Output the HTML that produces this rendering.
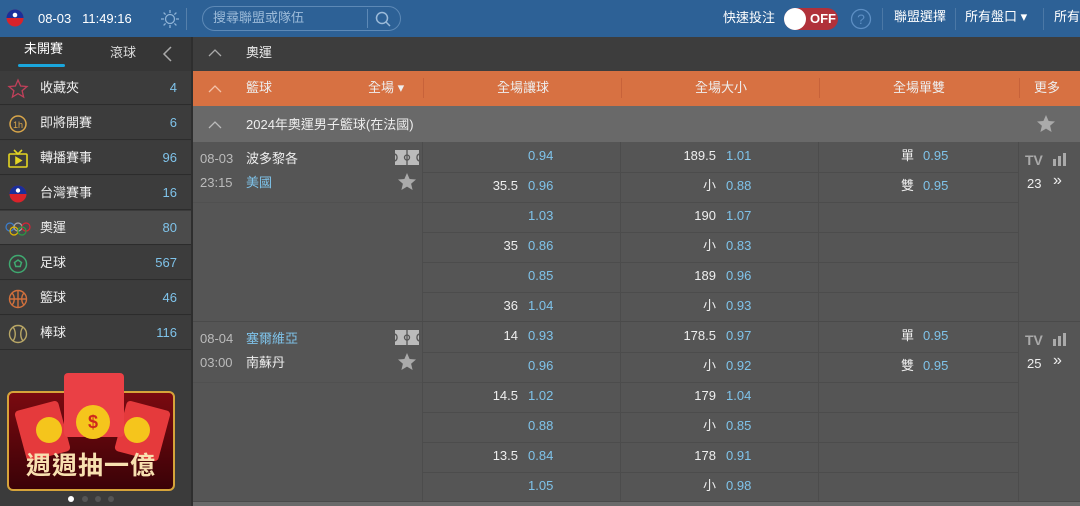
<!DOCTYPE html>
<html><head><meta charset="utf-8"><style>
*{margin:0;padding:0;box-sizing:border-box}
body{width:1080px;height:506px;overflow:hidden;background:#555;font-family:"Liberation Sans","Noto Sans CJK TC",sans-serif;font-size:13px;line-height:16px;color:#eee;position:relative}
.abs{position:absolute}
.top{left:0;top:0;width:1080px;height:37px;background:#2d6196}
.side{left:0;top:37px;width:191px;height:469px;background:#3b3b3b}
.item{position:absolute;left:0;width:191px;height:34px;border-bottom:1px solid #2c2c2c;background:#3c3c3c}
.item .t{position:absolute;left:40px;top:9px;font-size:13px;color:#eee}
.item .n{position:absolute;right:14px;top:9px;color:#7fc3ea;font-size:13px}
.item svg{position:absolute;left:7px;top:7px}
.blue{color:#7fc3ea}
.r{position:absolute;font-size:13px;line-height:16px}
.sep{position:absolute;background:#4c4c4c}
</style></head><body>
<div class="abs top">
 <svg class="abs" style="left:6px;top:9px" width="18" height="18"><circle cx="9" cy="9" r="8.5" fill="#d9232a"/><path d="M.5 9A8.5 8.5 0 0 1 17.5 9z" fill="#1a2f9a"/><circle cx="9" cy="6" r="2.3" fill="#fff"/></svg>
 <div class="abs" style="left:38px;top:11px;color:#fff;font-size:13px">08-03&nbsp;&nbsp;&nbsp;11:49:16</div>
 <svg class="abs" style="left:160px;top:9px" width="20" height="20" stroke="#8fb3d6" fill="none" stroke-width="1.3"><circle cx="10" cy="10" r="4.5"/><path d="M10 1v3M10 16v3M1 10h3M16 10h3M3.6 3.6l2 2M14.4 14.4l2 2M3.6 16.4l2-2M14.4 5.6l2-2"/></svg>
 <div class="abs" style="left:186px;top:8px;width:1px;height:22px;background:#5680ab"></div>
 <div class="abs" style="left:202px;top:6px;width:199px;height:25px;border:1px solid #5d89b6;border-radius:13px"></div>
 <div class="abs" style="left:213px;top:10px;color:#9cbbd9;font-size:13px">搜尋聯盟或隊伍</div>
 <div class="abs" style="left:367px;top:9px;width:1px;height:19px;background:#5d89b6"></div>
 <svg class="abs" style="left:374px;top:10px" width="18" height="18" stroke="#9cbbd9" fill="none" stroke-width="1.5"><circle cx="8" cy="8" r="5.5"/><path d="M12 12l4 4"/></svg>
 <div class="abs" style="left:723px;top:10px;color:#fff">快速投注</div>
 <div class="abs" style="left:784px;top:8px;width:54px;height:22px;border-radius:11px;background:#b0313a"></div>
 <div class="abs" style="left:784px;top:8px;width:22px;height:22px;border-radius:11px;background:#fff"></div>
 <div class="abs" style="left:810px;top:11px;color:#fff;font-weight:bold;font-size:13px">OFF</div>
 <svg class="abs" style="left:850px;top:8px" width="22" height="22" fill="none" stroke="#5d8fc4" stroke-width="1.3"><circle cx="11" cy="11" r="9.5"/><text x="11" y="16" fill="#5d8fc4" stroke="none" font-size="14" text-anchor="middle" font-family="Liberation Sans">?</text></svg>
 <div class="abs" style="left:882px;top:8px;width:1px;height:22px;background:#4b78a6"></div>
 <div class="abs" style="left:894px;top:9px;color:#fff">聯盟選擇</div>
 <div class="abs" style="left:955px;top:8px;width:1px;height:22px;background:#4b78a6"></div>
 <div class="abs" style="left:965px;top:9px;color:#fff">所有盤口 ▾</div>
 <div class="abs" style="left:1043px;top:8px;width:1px;height:22px;background:#4b78a6"></div>
 <div class="abs" style="left:1054px;top:9px;color:#fff">所有</div>
</div>
<div class="abs side">
 <div class="abs" style="left:0;top:0;width:191px;height:34px;background:#363636"></div>
 <div class="abs" style="left:24px;top:4px;color:#fff">未開賽</div>
 <div class="abs" style="left:18px;top:27px;width:47px;height:3px;background:#1aa6dc;border-radius:2px"></div>
 <div class="abs" style="left:110px;top:8px;color:#ddd">滾球</div>
 <svg class="abs" style="left:160px;top:8px" width="14" height="18" fill="none" stroke="#aaa" stroke-width="1.5"><path d="M11 2L4 9l7 7"/></svg>
 <div class="item" style="top:34px"><svg width="22" height="22" fill="none" stroke="#c2405a" stroke-width="1.3"><path d="M11 2l2.6 6 6.4.5-4.9 4.2 1.5 6.3L11 15.6 5.4 19l1.5-6.3L2 8.5 8.4 8z"/></svg><span class="t">收藏夾</span><span class="n">4</span></div>
 <div class="item" style="top:69px"><svg width="22" height="22"><circle cx="11" cy="11" r="8" fill="none" stroke="#d9a64a" stroke-width="1.5"/><text x="11" y="15" font-size="9" fill="#d9a64a" text-anchor="middle">1h</text></svg><span class="t">即將開賽</span><span class="n">6</span></div>
 <div class="item" style="top:104px"><svg width="22" height="22" fill="none" stroke="#e3d422" stroke-width="1.6"><rect x="2" y="6" width="18" height="13" rx="1"/><path d="M7 2l4 4 4-4"/><path d="M9 9.5v6l5-3z" fill="#e3d422"/></svg><span class="t">轉播賽事</span><span class="n">96</span></div>
 <div class="item" style="top:139px"><svg width="22" height="22"><circle cx="11" cy="11" r="8.5" fill="#d9232a"/><path d="M2.5 11A8.5 8.5 0 0 1 19.5 11z" fill="#1a2f9a"/><circle cx="11" cy="7.5" r="2.2" fill="#fff"/></svg><span class="t">台灣賽事</span><span class="n">16</span></div>
 <div class="item" style="top:174px;background:#4b4b4b"><svg width="28" height="22" style="left:4px" fill="none" stroke-width="1.2"><circle cx="6" cy="9" r="4" stroke="#3b7fd0"/><circle cx="14" cy="9" r="4" stroke="#aaa"/><circle cx="22" cy="9" r="4" stroke="#d23"/><circle cx="10" cy="13" r="4" stroke="#e3b800"/><circle cx="18" cy="13" r="4" stroke="#2a9a45"/></svg><span class="t">奧運</span><span class="n">80</span></div>
 <div class="item" style="top:209px"><svg width="22" height="22" fill="none" stroke="#3fa970" stroke-width="1.5"><circle cx="11" cy="11" r="8.5"/><path d="M11 7l3.5 2.5-1.3 4h-4.4l-1.3-4z"/></svg><span class="t">足球</span><span class="n">567</span></div>
 <div class="item" style="top:244px"><svg width="22" height="22" fill="none" stroke="#d1703c" stroke-width="1.4"><circle cx="11" cy="11" r="8.5"/><path d="M11 2.5v17M2.5 11h17M5 5c3 3 3 9 0 12M17 5c-3 3-3 9 0 12"/></svg><span class="t">籃球</span><span class="n">46</span></div>
 <div class="item" style="top:279px"><svg width="22" height="22" fill="none" stroke="#b9a766" stroke-width="1.4"><circle cx="11" cy="11" r="8.5"/><path d="M6 4c3 4 3 10 0 14M16 4c-3 4-3 10 0 14"/></svg><span class="t">棒球</span><span class="n">116</span></div>
 <div class="abs" style="left:7px;top:354px;width:168px;height:100px;border:2px solid #d6a43a;border-radius:6px;background:linear-gradient(#7a0a10,#3a0207)"></div>
 <div class="abs" style="left:20px;top:368px;width:45px;height:52px;background:#e53a3c;transform:rotate(-15deg);border-radius:4px"></div>
 <div class="abs" style="left:120px;top:368px;width:45px;height:52px;background:#e53a3c;transform:rotate(15deg);border-radius:4px"></div>
 <div class="abs" style="left:64px;top:336px;width:60px;height:64px;background:#ea4045;border-radius:4px"></div>
 <div class="abs" style="left:36px;top:380px;width:26px;height:26px;border-radius:50%;background:#f5c51c"></div>
 <div class="abs" style="left:76px;top:368px;width:34px;height:34px;border-radius:50%;background:#f5c51c;color:#d0281c;font-weight:bold;text-align:center;line-height:34px;font-size:18px">$</div>
 <div class="abs" style="left:124px;top:380px;width:26px;height:26px;border-radius:50%;background:#f5c51c"></div>
 <div class="abs" style="left:26px;top:414px;color:#f8e0b0;font-size:25px;line-height:30px;font-weight:bold;letter-spacing:1px">週週抽一億</div>
 <div class="abs" style="left:68px;top:459px;width:6px;height:6px;border-radius:50%;background:#fff"></div>
 <div class="abs" style="left:82px;top:459px;width:6px;height:6px;border-radius:50%;background:#555"></div>
 <div class="abs" style="left:95px;top:459px;width:6px;height:6px;border-radius:50%;background:#555"></div>
 <div class="abs" style="left:108px;top:459px;width:6px;height:6px;border-radius:50%;background:#555"></div>
</div>
<div class="abs" style="left:191px;top:37px;width:2px;height:469px;background:#2e2e2e"></div>
<div class="abs" style="left:193px;top:37px;width:887px;height:34px;background:#3d3d3d"></div>
<svg class="abs" style="left:208px;top:48px" width="14" height="10" fill="none" stroke="#aaa" stroke-width="1.3"><path d="M1 8l6-6 6 6"/></svg>
<div class="abs" style="left:246px;top:45px">奧運</div>
<div class="abs" style="left:193px;top:71px;width:887px;height:35px;background:#d77142"></div>
<svg class="abs" style="left:208px;top:84px" width="14" height="10" fill="none" stroke="#f3c2a9" stroke-width="1.3"><path d="M1 8l6-6 6 6"/></svg>
<div class="abs" style="left:246px;top:80px">籃球</div>
<div class="abs" style="left:368px;top:80px">全場 ▾</div>
<div class="abs" style="left:423px;top:78px;width:1px;height:20px;background:#c7623a"></div>
<div class="abs" style="left:497px;top:80px">全場讓球</div>
<div class="abs" style="left:621px;top:78px;width:1px;height:20px;background:#c7623a"></div>
<div class="abs" style="left:695px;top:80px">全場大小</div>
<div class="abs" style="left:819px;top:78px;width:1px;height:20px;background:#c7623a"></div>
<div class="abs" style="left:893px;top:80px">全場單雙</div>
<div class="abs" style="left:1019px;top:78px;width:1px;height:20px;background:#c7623a"></div>
<div class="abs" style="left:1034px;top:80px">更多</div>
<div class="abs" style="left:193px;top:106px;width:887px;height:36px;background:#696969"></div>
<svg class="abs" style="left:208px;top:120px" width="14" height="10" fill="none" stroke="#bbb" stroke-width="1.3"><path d="M1 8l6-6 6 6"/></svg>
<div class="abs" style="left:246px;top:117px">2024年奧運男子籃球(在法國)</div>
<svg class="abs" style="left:1036px;top:114px" width="20" height="20"><path d="M10 1l2.6 6 6.4.5-4.9 4.2 1.5 6.3L10 14.6 4.4 18l1.5-6.3L1 7.5 7.4 7z" fill="#aaa"/></svg>
<div id="m"></div>
<script>
var h='';
function match(y,d,t,a,b,aBlue,rows,oe,n){
 h+='<div class="abs" style="left:193px;top:'+y+'px;width:887px;height:180px;background:#555"></div>';
 for(var i=1;i<6;i++){h+='<div class="sep" style="left:423px;top:'+(y+i*30)+'px;width:596px;height:1px"></div>';}
 h+='<div class="sep" style="left:193px;top:'+(y+60)+'px;width:230px;height:1px;background:#505050"></div>';
 [422,620,818,1018].forEach(function(x){h+='<div class="sep" style="left:'+x+'px;top:'+y+'px;width:1px;height:180px"></div>';});
 h+='<div class="sep" style="left:193px;top:'+(y+179)+'px;width:887px;height:1px;background:#4a4a4a"></div>';
 h+='<div class="r" style="left:200px;top:'+(y+9)+'px;color:#bbb">'+d+'</div><div class="r" style="left:200px;top:'+(y+33)+'px;color:#bbb">'+t+'</div>';
 h+='<div class="r" style="left:246px;top:'+(y+9)+'px;'+(aBlue?'color:#7fc3ea':'')+'">'+a+'</div><div class="r" style="left:246px;top:'+(y+33)+'px;'+(aBlue?'':'color:#7fc3ea')+'">'+b+'</div>';
 h+='<div class="abs" style="left:395px;top:'+(y+8)+'px;width:24px;height:15px;background:#bbb"><svg width="24" height="15" fill="none" stroke="#555" stroke-width="1.3"><path d="M12 0v15M0 4a4 4 0 0 1 0 7M24 4a4 4 0 0 0 0 7"/><circle cx="12" cy="7.5" r="2.5"/></svg></div>';
 h+='<svg class="abs" style="left:397px;top:'+(y+30)+'px" width="20" height="20"><path d="M10 1l2.6 6 6.4.5-4.9 4.2 1.5 6.3L10 14.6 4.4 18l1.5-6.3L1 7.5 7.4 7z" fill="#aaa"/></svg>';
 rows.forEach(function(r,i){var ty=y+i*30+6;
  if(r[0])h+='<div class="r" style="right:562px;top:'+ty+'px;text-align:right">'+r[0]+'</div>';
  h+='<div class="r blue" style="left:528px;top:'+ty+'px">'+r[1]+'</div>';
  h+='<div class="r" style="right:364px;top:'+ty+'px;text-align:right">'+r[2]+'</div>';
  h+='<div class="r blue" style="left:726px;top:'+ty+'px">'+r[3]+'</div>';});
 h+='<div class="r" style="left:901px;top:'+(y+6)+'px">單</div><div class="r blue" style="left:923px;top:'+(y+6)+'px">0.95</div>';
 h+='<div class="r" style="left:901px;top:'+(y+36)+'px">雙</div><div class="r blue" style="left:923px;top:'+(y+36)+'px">0.95</div>';
 h+='<div class="r" style="left:1025px;top:'+(y+10)+'px;color:#aaa;font-weight:bold;font-size:14px">TV</div>';
 h+='<svg class="abs" style="left:1053px;top:'+(y+11)+'px" width="14" height="13" fill="#aaa"><rect x="0" y="6" width="3" height="7"/><rect x="5" y="3" width="3" height="10"/><rect x="10" y="0" width="3" height="13"/></svg>';
 h+='<div class="r" style="left:1027px;top:'+(y+34)+'px">'+n+'</div><div class="r" style="left:1053px;top:'+(y+31)+'px;font-size:16px">»</div>';
}
match(142,'08-03','23:15','波多黎各','美國',false,[['','0.94','189.5','1.01'],['35.5','0.96','小','0.88'],['','1.03','190','1.07'],['35','0.86','小','0.83'],['','0.85','189','0.96'],['36','1.04','小','0.93']],0,23);
match(322,'08-04','03:00','塞爾維亞','南蘇丹',true,[['14','0.93','178.5','0.97'],['','0.96','小','0.92'],['14.5','1.02','179','1.04'],['','0.88','小','0.85'],['13.5','0.84','178','0.91'],['','1.05','小','0.98']],0,25);
document.getElementById('m').innerHTML=h;
</script>
<div class="abs" style="left:193px;top:502px;width:887px;height:4px;background:#6a6a6a"></div>
</body></html>
